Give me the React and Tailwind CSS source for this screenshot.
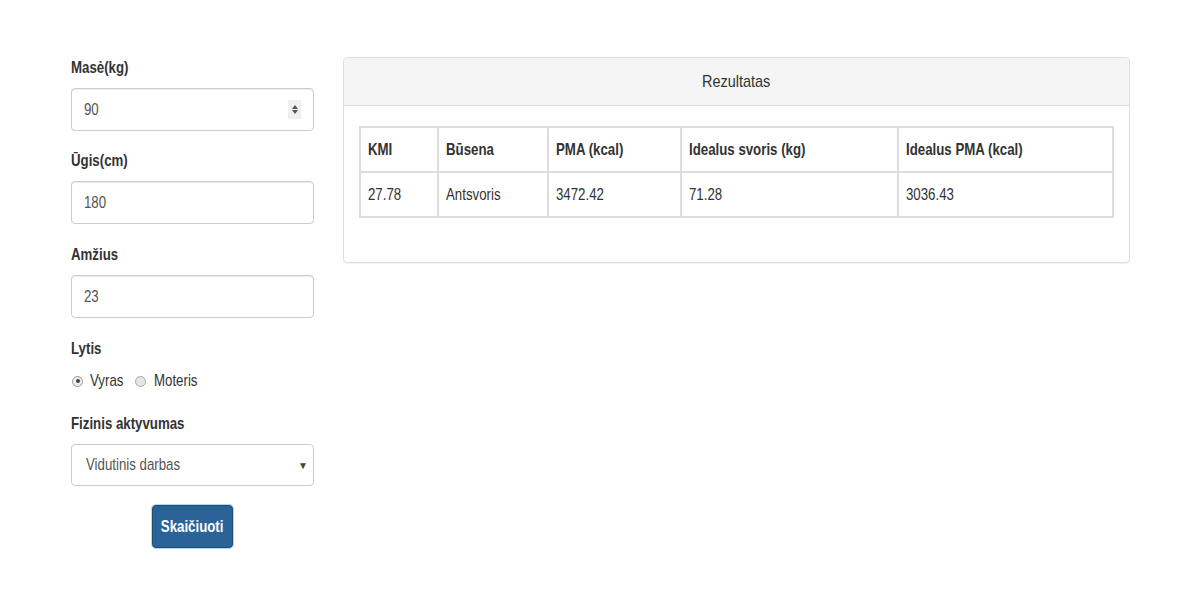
import React from "react";

const font = "font-['Liberation_Sans',Arial,sans-serif]";

// text in the shot is horizontally condensed
function N({ children, center = false, className = "" }) {
  return (
    <span
      className={`inline-block whitespace-nowrap ${center ? "origin-center" : "origin-left"} ${className || "scale-x-[0.78]"}`}
    >
      {children}
    </span>
  );
}

const cols = [
  { label: "KMI", value: "27.78", w: "w-[78px]" },
  { label: "Būsena", value: "Antsvoris", w: "w-[111px]" },
  { label: "PMA (kcal)", value: "3472.42", w: "w-[133px]" },
  { label: "Idealus svoris (kg)", value: "71.28", w: "w-[217px]" },
  { label: "Idealus PMA (kcal)", value: "3036.43", w: "w-[216px]" },
];

function Label({ children, className = "" }) {
  return (
    <div className={`h-[20px] leading-[20px] text-[17px] font-bold text-[#333] ${className}`}>
      <N>{children}</N>
    </div>
  );
}

function Field({ label, value, className = "", children }) {
  return (
    <div className={`mb-[20px] ${className}`}>
      <Label>{label}</Label>
      <div className="mt-[10px] h-[43px] border border-[#ccc] rounded-[4px] shadow-[inset_0_1px_1px_rgba(0,0,0,0.075)] flex items-center pl-[12px] pr-[8px] text-[17px] text-[#555]">
        <span className="flex-1">
          <N>{value}</N>
        </span>
        {children}
      </div>
    </div>
  );
}

export default function App() {
  return (
    <div className={`${font} bg-white w-[1200px] h-[600px] flex pl-[71px] pt-[59px] text-[#333]`}>
      {/* Form */}
      <div className="w-[243px] flex flex-col">
        <Field label="Masė(kg)" value="90" className="mt-[-1px]">
          <div className="w-[13px] h-[19px] bg-[#f0f0f0] flex flex-col items-center justify-center gap-[1px] mr-[4px]">
            <span className="w-0 h-0 border-x-[3px] border-x-transparent border-b-[4px] border-b-[#555]" />
            <span className="w-0 h-0 border-x-[3px] border-x-transparent border-t-[4px] border-t-[#555]" />
          </div>
        </Field>
        <Field label="Ūgis(cm)" value="180" />
        <Field label="Amžius" value="23" className="mt-[1px]" />

        <Label className="mt-[1px]">Lytis</Label>
        <div className="mt-[12px] h-[20px] flex items-center text-[17px] pl-[1px]">
          <span className="w-[11px] h-[11px] rounded-full border border-[#999] bg-[#eee] flex items-center justify-center">
            <span className="w-[4px] h-[4px] rounded-full bg-[#444]" />
          </span>
          <span className="ml-[7px] w-[42px]">
            <N>Vyras</N>
          </span>
          <span className="ml-[3px] w-[11px] h-[11px] rounded-full border border-[#aaa] bg-[#e6e6e6]" />
          <span className="ml-[8px]">
            <N>Moteris</N>
          </span>
        </div>

        <Label className="mt-[23px]">Fizinis aktyvumas</Label>
        <div className="mt-[10px] h-[42px] border border-[#ccc] rounded-[4px] flex items-center pl-[14px] pr-[5px] text-[17px] text-[#555]">
          <span className="flex-1">
            <N>Vidutinis darbas</N>
          </span>
          <span className="text-[10px] text-[#444]">▼</span>
        </div>

        <div className="mt-[19px] flex justify-center">
          <button className="w-[81px] h-[43px] rounded-[4px] bg-[#2a6397] border border-[#204d74] text-white text-[17px] font-bold shadow-[0_0_0_1px_rgba(102,175,233,0.5)] flex items-center justify-center">
            <N center>Skaičiuoti</N>
          </button>
        </div>
      </div>

      {/* Results panel */}
      <div className="ml-[29px] mt-[-2px] w-[787px] h-[206px] border border-[#ddd] rounded-[4px] shadow-[0_1px_1px_rgba(0,0,0,0.05)] flex flex-col">
        <div className="h-[48px] bg-[#f5f5f5] border-b border-[#ddd] rounded-t-[4px] flex items-center justify-center text-[17px] text-[#333]">
          <N center className="scale-x-[0.85]">Rezultatas</N>
        </div>
        <div className="pt-[20px] px-[15px]">
          <table className="border-collapse text-[17px]">
            <thead>
              <tr className="h-[45px]">
                {cols.map((c) => (
                  <th key={c.label} className={`${c.w} border-2 border-[#ddd] text-left font-bold px-[7px]`}>
                    <N>{c.label}</N>
                  </th>
                ))}
              </tr>
            </thead>
            <tbody>
              <tr className="h-[45px]">
                {cols.map((c) => (
                  <td key={c.label} className="border-2 border-[#ddd] px-[7px]">
                    <N>{c.value}</N>
                  </td>
                ))}
              </tr>
            </tbody>
          </table>
        </div>
      </div>
    </div>
  );
}
